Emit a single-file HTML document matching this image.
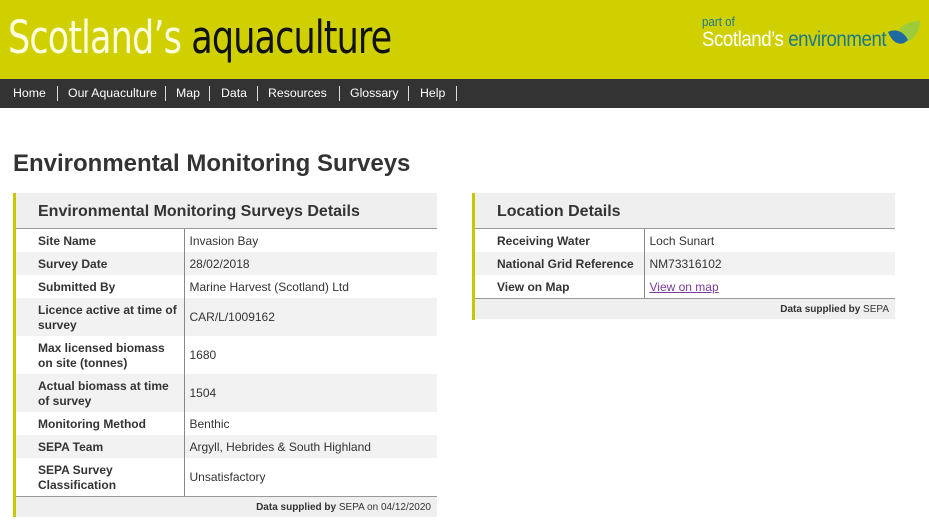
<!DOCTYPE html>
<html><head><meta charset="utf-8"><style>
*{margin:0;padding:0;box-sizing:border-box}
body{width:929px;height:523px;overflow:hidden;background:#fff;font-family:"Liberation Sans",Arial,sans-serif;color:#333;position:relative}
.top{position:absolute;left:0;top:0;width:929px;height:79px;background:#d0d000}
.logo{position:absolute;left:8px;top:12px;font-size:45px;letter-spacing:-1px;line-height:52px;font-family:"DejaVu Sans Condensed","Liberation Sans Narrow","Liberation Sans",sans-serif;transform:scaleX(0.865);transform-origin:left;white-space:nowrap}
.logo .w{color:#fffde0}.logo .b{color:#111}
.se{position:absolute;left:702px;top:14px;color:#1a7a8a;font-family:"Liberation Sans Narrow","Liberation Sans",sans-serif;transform:scaleX(0.89);transform-origin:left;white-space:nowrap}
.se .p{font-size:13px;color:#1a7a8a}
.se .m{font-size:21px;line-height:22px;letter-spacing:-0.5px}
.se .m span{color:#fff}
.nav{position:absolute;left:0;top:79px;width:929px;height:29px;background:#333;font-size:12.3px;color:#fff}
.nav span{position:absolute;top:7px}
.nav i{position:absolute;top:7px;width:1px;height:15px;background:#ddd}
h1{position:absolute;left:13px;top:150px;font-size:24px;font-weight:bold;color:#333}
.panel{position:absolute;border-left:3px solid #c8c800;background:#fff}
.hd{height:36px;background:#efefef;font-weight:bold;font-size:16px;padding:10px 0 0 22px;border-bottom:1px solid #999}
table{border-collapse:collapse;width:100%;font-size:12px}
td{padding:1px 0 0 22px;vertical-align:middle;line-height:15px}
td.l{font-weight:bold;border-right:1px solid #888;padding-right:6px}
td.r{padding-left:5px}
tr.g td{background:#f2f2f2}
.ft{background:#efefef;border-top:1px solid #999;font-size:10px;text-align:right;padding:5px 6px 0 0;height:21px}
a{color:#7a3a9a;text-decoration:underline}
</style></head><body>
<div class="top">
<div class="logo"><span class="w">Scotland’s</span> <span class="b">aquaculture</span></div>
<div class="se"><div class="p">part of</div><div class="m"><span>Scotland’s</span> environment</div></div>
<svg style="position:absolute;left:886px;top:18px" width="36" height="32" viewBox="0 0 36 32"><path d="M14 10 C24 2 32 4 34 2 C34 14 28 24 16 24 Z" fill="#9ccb3b"/><path d="M2 14 C10 10 18 14 22 22 C14 30 6 24 2 14 Z" fill="#1e6aa0"/></svg>
</div>
<div class="nav">
<span style="left:13px">Home</span><i style="left:57px"></i>
<span style="left:68px">Our Aquaculture</span><i style="left:165px"></i>
<span style="left:176px">Map</span><i style="left:209px"></i>
<span style="left:221px">Data</span><i style="left:257px"></i>
<span style="left:268px">Resources</span><i style="left:339px"></i>
<span style="left:350px">Glossary</span><i style="left:408px"></i>
<span style="left:420px">Help</span><i style="left:456px"></i>
</div>
<h1>Environmental Monitoring Surveys</h1>
<div class="panel" style="left:13px;top:193px;width:424px;height:324px">
<div class="hd">Environmental Monitoring Surveys Details</div>
<table>
<tr style="height:23px"><td class="l" style="width:168px">Site Name</td><td class="r">Invasion Bay</td></tr>
<tr class="g" style="height:23px"><td class="l">Survey Date</td><td class="r">28/02/2018</td></tr>
<tr style="height:23px"><td class="l">Submitted By</td><td class="r">Marine Harvest (Scotland) Ltd</td></tr>
<tr class="g" style="height:38px"><td class="l">Licence active at time of survey</td><td class="r">CAR/L/1009162</td></tr>
<tr style="height:38px"><td class="l">Max licensed biomass on site (tonnes)</td><td class="r">1680</td></tr>
<tr class="g" style="height:38px"><td class="l">Actual biomass at time of survey</td><td class="r">1504</td></tr>
<tr style="height:23px"><td class="l">Monitoring Method</td><td class="r">Benthic</td></tr>
<tr class="g" style="height:23px"><td class="l">SEPA Team</td><td class="r">Argyll, Hebrides &amp; South Highland</td></tr>
<tr style="height:38px"><td class="l">SEPA Survey Classification</td><td class="r">Unsatisfactory</td></tr>
</table>
<div class="ft"><b>Data supplied by</b> SEPA on 04/12/2020</div>
</div>
<div class="panel" style="left:472px;top:193px;width:423px;height:127px">
<div class="hd">Location Details</div>
<table>
<tr style="height:23px"><td class="l" style="width:169px">Receiving Water</td><td class="r">Loch Sunart</td></tr>
<tr class="g" style="height:23px"><td class="l">National Grid Reference</td><td class="r">NM73316102</td></tr>
<tr style="height:23px"><td class="l">View on Map</td><td class="r"><a>View on map</a></td></tr>
</table>
<div class="ft"><b>Data supplied by</b> SEPA</div>
</div>
</body></html>
